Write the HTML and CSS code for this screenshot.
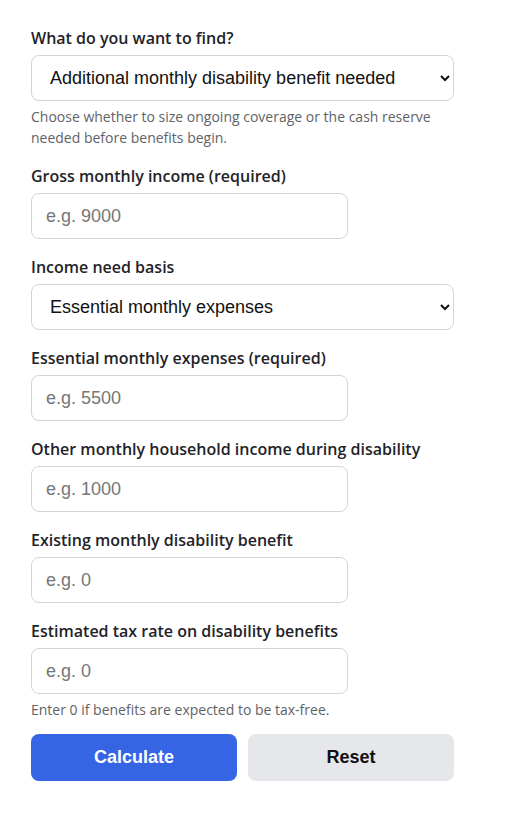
FILE: index.html
```html
<!DOCTYPE html>
<html lang="en">
<head>
  <meta charset="UTF-8">
  <meta name="viewport" content="width=device-width, initial-scale=1.0">
  <title>Disability Insurance Calculator</title>
  <link rel="stylesheet" href="styles.css">
</head>
<body>
  <form class="calc" id="calc-form">
    <div class="field">
      <label for="goal">What do you want to find?</label>
      <select id="goal" class="wide">
        <option value="benefit">Additional monthly disability benefit needed</option>
        <option value="reserve">Cash reserve needed before benefits begin</option>
      </select>
      <p class="hint">Choose whether to size ongoing coverage or the cash reserve needed before benefits begin.</p>
    </div>

    <div class="field">
      <label for="income">Gross monthly income (required)</label>
      <input id="income" type="number" placeholder="e.g. 9000">
    </div>

    <div class="field">
      <label for="basis">Income need basis</label>
      <select id="basis" class="wide">
        <option value="expenses">Essential monthly expenses</option>
        <option value="percent">Percentage of gross income</option>
      </select>
    </div>

    <div class="field">
      <label for="expenses">Essential monthly expenses (required)</label>
      <input id="expenses" type="number" placeholder="e.g. 5500">
    </div>

    <div class="field">
      <label for="other">Other monthly household income during disability</label>
      <input id="other" type="number" placeholder="e.g. 1000">
    </div>

    <div class="field">
      <label for="existing">Existing monthly disability benefit</label>
      <input id="existing" type="number" placeholder="e.g. 0">
    </div>

    <div class="field last">
      <label for="tax">Estimated tax rate on disability benefits</label>
      <input id="tax" type="number" placeholder="e.g. 0">
      <p class="hint">Enter 0 if benefits are expected to be tax-free.</p>
    </div>

    <div class="actions">
      <button type="button" class="btn btn-primary">Calculate</button>
      <button type="reset" class="btn btn-secondary">Reset</button>
    </div>
  </form>
</body>
</html>
```

FILE: styles.css
```css
body { margin: 0; padding: 26px 31px; font-family: "Open Sans", sans-serif; color: #1f2328; background: #fff; }
.calc { width: 423px; }
.field { margin-bottom: 16px; }
.field.last { margin-bottom: 14px; }
label { display: block; font-size: 16px; font-weight: 600; line-height: 24px; margin-bottom: 5px; }
input, select { display: block; box-sizing: border-box; height: 46px; font-family: "Liberation Sans", Arial, sans-serif; font-size: 18px; color: #111; border: 1px solid #d1d5db; border-radius: 8px; background: #fff; padding: 0 14px; }
input { width: 317px; }
input::placeholder { color: #777; }
select.wide { width: 423px; }
.hint { margin: 5px 0 0; font-size: 14px; line-height: 21px; color: #5f6368; }
.actions { display: grid; grid-template-columns: 1fr 1fr; gap: 11px; }
.btn { height: 47px; border: none; border-radius: 8px; font-family: "Liberation Sans", Arial, sans-serif; font-size: 18px; font-weight: bold; }
.btn-primary { background: #3565e5; color: #fff; }
.btn-secondary { background: #e5e7eb; color: #111; }
```
